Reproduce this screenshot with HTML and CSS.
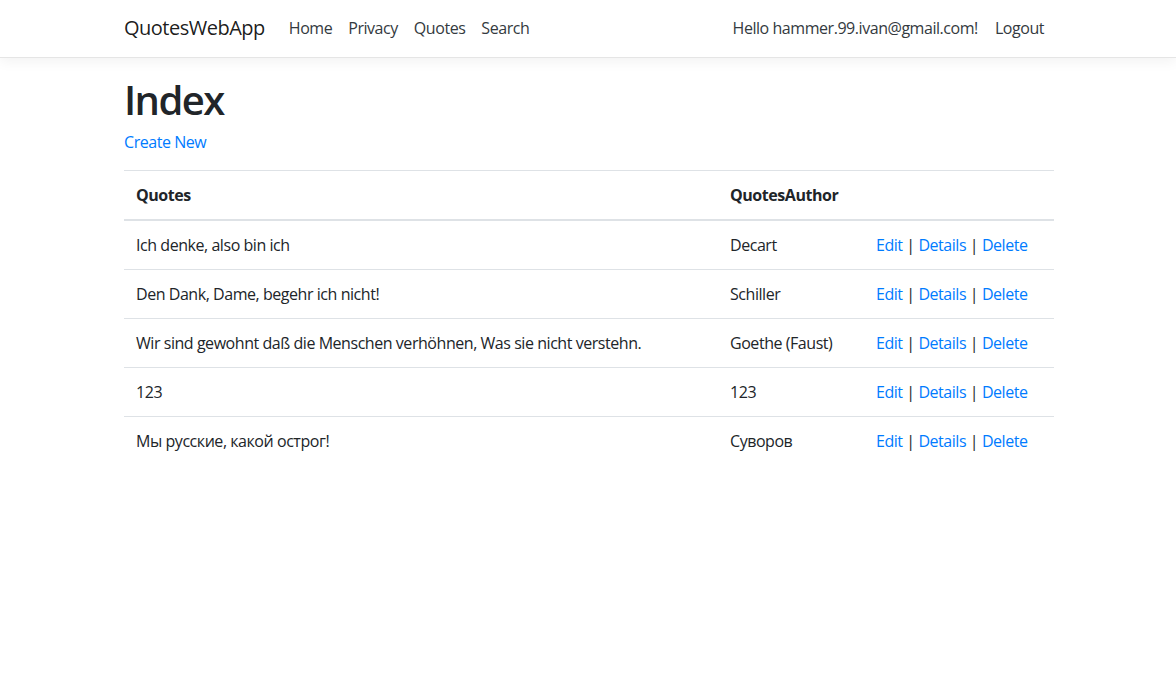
FILE: index.html
```html
<!DOCTYPE html>
<html lang="en">
<head>
<meta charset="utf-8">
<title>Index - QuotesWebApp</title>
<link rel="stylesheet" href="styles.css">
</head>
<body>
<header>
  <nav class="navbar">
    <div class="container nav-inner">
      <a class="brand" href="#">QuotesWebApp</a>
      <ul class="nav-list grow">
        <li><a class="nav-link" href="#">Home</a></li>
        <li><a class="nav-link" href="#">Privacy</a></li>
        <li><a class="nav-link" href="#">Quotes</a></li>
        <li><a class="nav-link" href="#">Search</a></li>
      </ul>
      <ul class="nav-list">
        <li><a class="nav-link" href="#">Hello hammer.99.ivan@gmail.com!</a></li>
        <li><button class="nav-link logout" type="button">Logout</button></li>
      </ul>
    </div>
  </nav>
</header>
<main class="container main">
  <h1 class="title">Index</h1>
  <p class="create"><a class="link" href="#">Create New</a></p>
  <table class="table">
    <colgroup>
      <col class="c-quote">
      <col class="c-author">
      <col class="c-actions">
    </colgroup>
    <thead>
      <tr><th>Quotes</th><th>QuotesAuthor</th><th></th></tr>
    </thead>
    <tbody>
      <tr><td>Ich denke, also bin ich</td><td>Decart</td><td><a class="link" href="#">Edit</a> | <a class="link" href="#">Details</a> | <a class="link" href="#">Delete</a></td></tr>
      <tr><td>Den Dank, Dame, begehr ich nicht!</td><td>Schiller</td><td><a class="link" href="#">Edit</a> | <a class="link" href="#">Details</a> | <a class="link" href="#">Delete</a></td></tr>
      <tr><td>Wir sind gewohnt daß die Menschen verhöhnen, Was sie nicht verstehn.</td><td>Goethe (Faust)</td><td><a class="link" href="#">Edit</a> | <a class="link" href="#">Details</a> | <a class="link" href="#">Delete</a></td></tr>
      <tr><td>123</td><td>123</td><td><a class="link" href="#">Edit</a> | <a class="link" href="#">Details</a> | <a class="link" href="#">Delete</a></td></tr>
      <tr><td>Мы русские, какой острог!</td><td>Суворов</td><td><a class="link" href="#">Edit</a> | <a class="link" href="#">Details</a> | <a class="link" href="#">Delete</a></td></tr>
    </tbody>
  </table>
</main>
</body>
</html>
```
FILE: styles.css
```css
* { box-sizing: border-box; }
html, body { margin: 0; padding: 0; }
body {
  font-family: "Open Sans", "Noto Sans", sans-serif;
  font-size: 16px;
  line-height: 24px;
  color: #212529;
  background: #fff;
  letter-spacing: -0.45px;
}
.container {
  width: 960px;
  margin: 0 auto;
  padding: 0 14px 0 16px;
}
.navbar {
  background: #fff;
  border-bottom: 1px solid #e5e5e5;
  box-shadow: 0 4px 12px rgba(0,0,0,.05);
  padding: 8px 0 9px;
  margin-bottom: 16px;
}
.nav-inner {
  display: flex;
  align-items: center;
}
.brand {
  font-size: 20px;
  line-height: 30px;
  padding: 5px 0;
  margin-right: 16px;
  color: rgba(0,0,0,.9);
  text-decoration: none;
  letter-spacing: -0.5px;
}
.nav-list {
  display: flex;
  list-style: none;
  margin: 0;
  padding: 0;
}
.grow { flex-grow: 1; }
.nav-link {
  display: block;
  padding: 8px;
  color: #343a40;
  text-decoration: none;
  font: inherit;
  letter-spacing: inherit;
  line-height: 24px;
}
.logout {
  background: none;
  border: 0;
  cursor: pointer;
  padding: 8px 10px 8px 9px;
}
.main { padding-bottom: 16px; }
.title {
  font-size: 40px;
  line-height: 48px;
  font-weight: 600;
  margin: 0 0 6px;
  padding-top: 2px;
  letter-spacing: -1.6px;
}
.create { margin: 0 0 16px; }
.link { color: #007bff; text-decoration: none; }
.table {
  width: 100%;
  border-collapse: collapse;
  table-layout: fixed;
}
.c-quote { width: 594px; }
.c-author { width: 146px; }
.c-actions { width: 190px; }
.table th, .table td {
  padding: 12px;
  text-align: left;
  vertical-align: top;
  border-top: 1px solid #dee2e6;
  white-space: nowrap;
}
.table th { font-weight: 700; }
.table thead th { border-bottom: 2px solid #dee2e6; }
```
